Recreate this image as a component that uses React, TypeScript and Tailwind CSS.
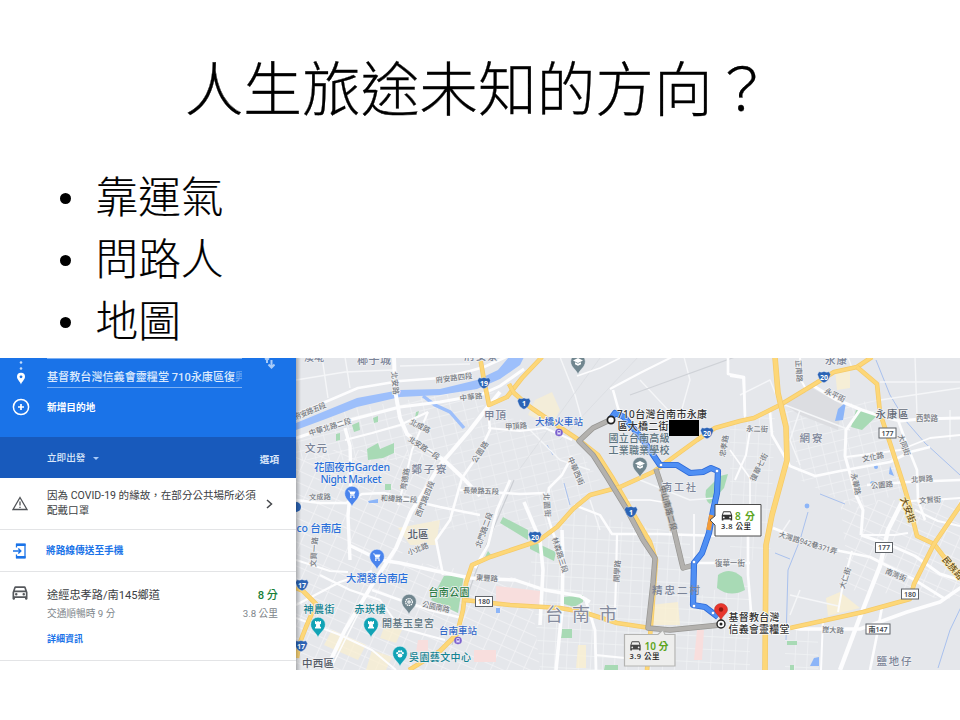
import React from "react";

const CJK = "font-['Noto_Sans','Noto_Sans_CJK_TC',sans-serif]";

type Pt = string;

function Road({ d, w = 3, c = "#fdfdfe" }: { d: Pt; w?: number; c?: string }) {
  return <polyline points={d} fill="none" stroke={c} strokeWidth={w} strokeLinejoin="round" strokeLinecap="butt" />;
}

function Yellow({ d, w = 4 }: { d: Pt; w?: number }) {
  return (
    <g fill="none" strokeLinejoin="round">
      <polyline points={d} stroke="#f5ca68" strokeWidth={w + 0.6} />
      <polyline points={d} stroke="#fdd778" strokeWidth={w - 0.8} />
    </g>
  );
}

type LabelProps = {
  x: number; y: number; s: number; t: string; w: number;
  c?: string; r?: number; b?: number; halo?: string;
};

// x, y give the centre of the label; w is its drawn width.
function Label({ x, y, s, t, w, c = "#777b82", r = 0, b = 500, halo = "#f0f1f3" }: LabelProps) {
  return (
    <text
      x={x} y={y + s * 0.36} fontSize={s} fill={c} fontWeight={b} textAnchor="middle"
      textLength={w} lengthAdjust="spacing" transform={`rotate(${r} ${x} ${y})`}
      stroke={halo} strokeWidth={1.6} strokeLinejoin="round" paintOrder="stroke"
    >
      {t}
    </text>
  );
}

function Shield({ x, y, n }: { x: number; y: number; n: string }) {
  return (
    <g transform={`translate(${x} ${y})`}>
      <path d="M-5-5.2Q-2.5-4.2 0-5.6Q2.5-4.2 5-5.2L6.5-2.6C5 1 5 3.4 0 5.8C-5 3.4-5 1-6.5-2.6Z" fill="#2b63b5" stroke="#dfe7f4" strokeWidth=".4" />
      <text y="2.6" fontSize="7" fontWeight="700" fill="#fff" textAnchor="middle">{n}</text>
    </g>
  );
}

function Plate({ x, y, t, w = 17 }: { x: number; y: number; t: string; w?: number }) {
  return (
    <g>
      <rect x={x - w / 2} y={y - 5} width={w} height="10" fill="#fff" stroke="#5f6368" strokeWidth="1" />
      <text x={x} y={y + 2.6} fontSize="7" fontWeight="600" fill="#454a50" textAnchor="middle">{t}</text>
    </g>
  );
}

function Pin({ x, y, c, kind }: { x: number; y: number; c: string; kind: "cart" | "tower" | "cap" | "dot" | "art" }) {
  return (
    <g transform={`translate(${x} ${y})`}>
      <path d="M0 12.5C-1.5 7.6-7.3 5.4-7.3-.5A7.3 7.3 0 0 1 7.3-.5C7.3 5.4 1.5 7.6 0 12.5Z" fill={c} stroke="#eef2f6" strokeWidth=".5" />
      {kind === "cart" && (
        <g fill="#fff">
          <path d="M-4-3.6H-2.4L-2-2.6H3.6L2.2.8H-1.6L-2.8-2.8H-4Z" />
          <rect x="-2" y="1.3" width="4.6" height=".8" />
          <circle cx="-1.2" cy="3.1" r=".9" /><circle cx="2" cy="3.1" r=".9" />
        </g>
      )}
      {kind === "tower" && <path d="M-3-4H-1.7V-3H-.7V-4H.7V-3H1.7V-4H3V-1.2L1.8-.5L2.3 2H3V3.6H-3V2H-2.3L-1.8-.5L-3-1.2Z" fill="#fff" />}
      {kind === "cap" && <path d="M0-4L5-1.5L0 1L-5-1.5ZM-3 .3L0 1.8L3 .3V2.2L0 3.8L-3 2.2Z" fill="#fff" />}
      {kind === "dot" && (
        <g fill="none" stroke="#fff"><circle r="3.4" strokeWidth="1.2" strokeDasharray="1.4 .6" /><circle r="1.2" strokeWidth="1.2" /></g>
      )}
      {kind === "art" && (
        <g fill="#fff"><ellipse cy="1.4" rx="2.4" ry="2" /><circle cx="-2.8" cy="-.8" r="1.1" /><circle cx="2.8" cy="-.8" r="1.1" /><circle cx="-1" cy="-2.6" r="1.1" /><circle cx="1.2" cy="-2.6" r="1.1" /></g>
      )}
    </g>
  );
}

function Station({ x, y }: { x: number; y: number }) {
  return (
    <g transform={`translate(${x} ${y})`}>
      <circle r="3.8" fill="#7c62cf" />
      <rect x="-1.7" y="-2.5" width="3.4" height="4.2" rx="1" fill="#e8e2fa" />
      <path d="M-1.2-1.6H1.2V0H-1.2Z" fill="#7c62cf" />
      <path d="M-1.5 2.8L-.8 1.6M1.5 2.8L.8 1.6" stroke="#e8e2fa" strokeWidth=".6" />
    </g>
  );
}

const CAR = "M18.92 5.01C18.72 4.42 18.16 4 17.5 4h-11c-.66 0-1.21.42-1.42 1.01L3 11v8c0 .55.45 1 1 1h1c.55 0 1-.45 1-1v-1h12v1c0 .55.45 1 1 1h1c.55 0 1-.45 1-1v-8l-2.08-5.99zM6.85 6h10.29l1.04 3H5.81l1.04-3zM19 16H5v-5h14v5z";
const SOLID_CAR = "M18.92 5.01C18.72 4.42 18.16 4 17.5 4h-11c-.66 0-1.21.42-1.42 1.01L3 11v8c0 .55.45 1 1 1h1c.55 0 1-.45 1-1v-1h12v1c0 .55.45 1 1 1h1c.55 0 1-.45 1-1v-8l-2.08-5.99zM6.5 16a1.5 1.5 0 1 1 0-3a1.5 1.5 0 0 1 0 3zM17.5 16a1.5 1.5 0 1 1 0-3a1.5 1.5 0 0 1 0 3zM5 10l1.5-4.500h11L19 10z";
const LAMPS = "M7.5 12a1.5 1.5 0 1 0 0 3a1.5 1.5 0 0 0 0-3M16.5 12a1.5 1.5 0 1 0 0 3a1.5 1.5 0 0 0 0-3";

const WHITE_ROADS: [string, number][] = [
  ["296,414 330,400 358,388 400,381 440,378 470,371 484,367 506,357", 2.6],
  ["296,438 330,427 350,420 400,407 440,402 480,395 500,386 524,369", 3],
  ["394,357 395,390 400,418 407,434 425,448 445,461 463,478 480,496", 4],
  ["500,392 487,408 470,430 440,465 425,490 411,512 396,548 372,585 345,630 326,670", 4],
  ["345,428 350,446 351,480 348,516 350,560", 3.4],
  ["345,440 372,433 400,425 428,412", 2.2],
  ["296,500 320,503 346,503 362,494 384,493 410,500 440,507 480,515", 2.4],
  ["428,412 412,450 405,480 398,505", 2],
  ["488,408 490,430 478,455 462,478 450,520 436,540 443,575", 2.6],
  ["488,428 520,431 545,428 572,440", 2],
  ["460,490 490,492 520,494 545,493", 2.4],
  ["296,605 340,582 372,571", 2.2],
  ["349,545 380,560 400,563 436,571 470,578 515,580 545,590 580,596 590,602", 3.4],
  ["296,560 330,571 348,572", 2],
  ["372,590 400,600 430,610 462,618", 2.8],
  ["320,575 350,590 380,600 400,628 445,640", 2],
  ["296,618 340,635 372,650 396,670", 2],
  ["360,610 340,650 330,670", 1.6],
  ["510,480 497,510 488,545 475,568", 2.8],
  ["524,502 540,540 543,570 540,625", 3.6],
  ["562,530 563,560 562,610 556,670", 3.6],
  ["572,456 562,475 549,488 546,510 552,530 563,560", 2.6],
  ["574,505 600,515 612,534 660,534 720,536", 2.4],
  ["617,535 616,580 615,612", 2.2],
  ["585,598 595,630 596,670", 2.8],
  ["622,500 650,500 668,503", 1.6],
  ["596,655 625,658 650,660", 1.8],
  ["613,390 618,408 626,424", 2.6],
  ["610,389 640,373 672,357", 2],
  ["577,376 600,368 620,358", 1.6],
  ["728,357 728,374 744,377 745,416", 2.6],
  ["730,376 743,378 745,420", 1.8],
  ["770,412 772,435 790,466 815,476 840,471 890,462 910,452 930,447", 2.6],
  ["800,357 801,380 807,391", 2],
  ["812,385 835,399 862,410 880,416 900,421 920,419 960,418", 3.2],
  ["860,410 846,430 845,456 856,495 863,510 861,535", 3],
  ["861,535 890,545 915,556 940,574 960,580", 3],
  ["773,528 803,540 840,551 870,557 913,579 945,599", 2.8],
  ["898,420 907,445 917,470 918,500 925,520", 2.6],
  ["846,457 900,450 930,438 960,435", 1.8],
  ["867,485 908,482 960,480", 2.4],
  ["910,501 932,500 960,498", 2.2],
  ["903,500 888,530 880,566 860,617 840,670", 4.4],
  ["963,586 940,602 907,612 860,629 800,629 782,626", 3.6],
  ["882,607 876,640 870,670", 2.6],
  ["823,618 821,670", 2],
  ["852,551 843,584 838,612", 2],
  ["863,535 895,535 908,533", 2],
  ["915,510 938,521 960,526", 2],
  ["748,510 748,575 752,623", 2.6],
  ["694,563 750,563", 2.4],
  ["694,514 694,600", 1.6],
  ["750,430 746,455 735,480", 2],
  ["730,450 750,478 750,520", 1.6],
];

const MINOR = [
  "640,380 670,412 690,430", "560,357 575,395 582,420", "520,420 560,460 590,470", "610,455 650,440",
  "676,430 690,380 684,357", "640,480 690,500 715,498", "590,500 600,530", "780,405 770,380 740,395",
  "785,405 850,430", "880,382 960,382", "880,400 960,388", "915,357 917,415", "950,410 950,440",
  "800,410 790,440 800,465", "790,520 780,535", "848,357 852,368", "800,590 790,615", "790,595 838,606",
  "322,357 328,398", "296,380 345,372 394,370", "345,357 350,388", "400,366 470,364",
];

const MAIN_ROUTE = "610,420 615,413 624,417 643,440 660,465 677,465 690,473 703,472 711,468 718,471 717,493 713,511 709,533 702,553 694,563 693,605 705,607 718,617";

function MapView() {
  return (
    <svg className={`block h-[312px] w-[664px] shrink-0 ${CJK}`} viewBox="296 358 664 312">
      <defs>
        <pattern id="gridA" width="13" height="10" patternUnits="userSpaceOnUse" patternTransform="rotate(-14)">
          <path d="M0 0H13M0 0V10" stroke="#f1f2f5" strokeWidth="1.4" fill="none" />
        </pattern>
        <pattern id="gridB" width="15" height="11" patternUnits="userSpaceOnUse" patternTransform="rotate(24)">
          <path d="M0 0H15M0 0V11" stroke="#f3f4f6" strokeWidth="1.5" fill="none" />
        </pattern>
        <pattern id="gridC" width="12" height="13" patternUnits="userSpaceOnUse" patternTransform="rotate(3)">
          <path d="M0 0H12M0 0V13" stroke="#f1f3f5" strokeWidth="1.4" fill="none" />
        </pattern>
        <linearGradient id="edge" x1="0" x2="1" y1="0" y2="0">
          <stop offset="0" stopColor="#000" stopOpacity=".25" />
          <stop offset="1" stopColor="#000" stopOpacity="0" />
        </linearGradient>
      </defs>
      <rect x="296" y="358" width="664" height="312" fill="#e5e7eb" />

      {/* built-up blocks */}
      <path d="M345 410L500 385L480 410L445 460H296V440Z" fill="url(#gridA)" />
      <path d="M490 410L572 441L600 480L560 530H430L445 465Z" fill="url(#gridA)" opacity=".8" />
      <path d="M296 450H440L400 560L530 580L540 670H296Z" fill="url(#gridB)" />
      <path d="M530 550L572 512L690 535V600L750 575V670H540Z" fill="url(#gridC)" />
      <path d="M730 425L775 412L770 560L730 560Z" fill="url(#gridC)" opacity=".8" />
      <path d="M785 410L878 400L905 490L860 510L800 480Z" fill="url(#gridA)" />
      <path d="M840 500L960 500V600L850 590Z" fill="url(#gridB)" />
      <path d="M785 630H818V670H785Z" fill="url(#gridC)" />
      <path d="M782 403L812 388L842 405L838 430L800 415Z" fill="#dcdde1" />

      {/* commercial and medical blocks */}
      <g fill="#fbf0cf">
        <path d="M535 400L552 392L560 410L552 425L528 415Z" opacity=".65" />
        <path d="M398 528L440 520L436 545L410 545Z" opacity=".7" />
        <path d="M332 630L366 645L358 660L324 645ZM372 650L392 657L386 670H366ZM385 625L402 630L396 643L380 638Z" opacity=".7" />
        <path d="M650 605L678 602L680 625H652ZM578 645H586V668H576ZM835 370L850 368V388L837 390ZM826 598L840 592L860 608L828 616Z" opacity=".75" />
      </g>
      <g fill="#f8dedd">
        <path d="M496 586L540 591V604H496ZM697 630H704L702 660H694ZM418 640H428V652H416ZM474 650H496V662H474Z" />
      </g>

      {/* water */}
      <path d="M296 423L330 409L357 398L400 390L440 389L477 380L498 370L509 357H524L520 365L500 379L477 389L440 395L400 397L357 407L323 420L296 430Z" fill="#9dbffb" />
      <path d="M423 396L435 405L450 412L464 428" fill="none" stroke="#9dbffb" strokeWidth="3.4" />
      <g fill="none" stroke="#a9c1ee" strokeWidth="1">
        <path d="M876 360L890 395L905 420L925 443L960 475M808 512L800 540L788 570L786 640M962 605L950 630L938 668M775 553L790 559M820 494L845 504M547 445L553 455M564 483L570 505" />
      </g>
      <g fill="#8cb5f8">
        <path d="M838 409L846 402L843 420L835 421ZM368 501L378 499V503H369ZM890 466L894 476L889 474ZM814 658L819 657V666H810ZM446 597H457V603H447ZM496 608H500V613H496Z" />
        <circle cx="807" cy="506" r="2.4" /><circle cx="876" cy="467" r="2" /><circle cx="873" cy="484" r="3" />
      </g>

      {/* parks */}
      <g fill="#a8dab5">
        <path d="M444 576L464 575L458 613L431 600Z" />
        <path d="M367 449L378 443L380 449L394 443V453L383 458L368 460Z" />
        <path d="M352 425L359 422L360 430L354 432ZM336 434L340 433V440L336 441ZM373 418L378 416V422L374 423ZM385 484H391V490H385ZM416 412L419 411L417 418H415Z" />
        <path d="M856 410L880 413L862 430L851 427Z" />
        <path d="M706 490L720 476L728 474L724 488L710 504Q704 500 706 490Z" />
        <path d="M718 575Q730 566 742 577L745 590Q730 598 717 588Z" />
        <path d="M564 597L583 595V602L574 607L564 604ZM530 540L556 552L554 561L530 549ZM503 517L528 530V540L500 523ZM562 629H572V638H561ZM605 665H618V670H604ZM488 551L492 556L485 557ZM787 641H797V645H787ZM790 665H794V670H790Z" />
      </g>

      {MINOR.map((d) => <Road key={d} d={d} w={1.4} c="#f5f6f8" />)}
      <path d="M519 470L600 358M640 355L560 440" stroke="#d9dbe0" strokeWidth="1" fill="none" opacity=".7" />
      <path d="M514 480L480 560L466 600L452 645" stroke="#cbced3" strokeWidth="1.2" fill="none" />
      <path d="M630 395L735 357" stroke="#cfd2d7" strokeWidth="1.2" fill="none" />
      {WHITE_ROADS.map(([d, w]) => <Road key={d} d={d} w={w} />)}

      <Yellow d="480,357 484,380 489,405 507,397 522,378 542,357" />
      <Yellow d="509,384 514,393 530,407 555,424 579,440 598,455 612,477 630,508 650,542 656,560 651,625 647,670" />
      <Yellow d="409,670 440,651 457,634 463,610 466,583 472,565 490,557 520,547 538,541 557,527 573,509 590,495 620,487 653,472 697,440 715,428 740,421 754,418 780,405 813,385 834,372 857,367 872,357" />
      <Yellow d="857,367 877,384 880,413 890,443 903,483 909,503 913,520 917,536 934,544 962,580" />
      <Yellow d="962,503 934,544 914,584 910,599 863,612 790,628" />
      <Yellow d="464,600 510,605 560,608 583,612 617,623 650,628" />
      <Yellow d="296,588 303,591 316,604 306,627 299,645 297,658" />
      <Yellow d="775,357 778,393 786,427 787,460 778,493 772,515 766,545 765,670" w={5} />

      {/* alternative routes */}
      {["610,420 593,428 579,441 593,455 607,477 626,508 643,540 655,558 653,583 648,628 670,630 720,625", "656,469 668,505 683,568 694,565"].map((d) => (
        <g key={d} fill="none" strokeLinejoin="round">
          <polyline points={d} stroke="#979693" strokeWidth="5.400" />
          <polyline points={d} stroke="#b3b1ae" strokeWidth="4" />
        </g>
      ))}

      <g fill="none" strokeLinejoin="round">
        <polyline points={MAIN_ROUTE} stroke="#2d6ad8" strokeWidth="6.200" />
        <polyline points={MAIN_ROUTE} stroke="#4f8ff4" strokeWidth="4.600" />
        <path d="M711.500 515L708.500 530" stroke="#f29b38" strokeWidth="4.600" />
      </g>
      {[[661, 465], [717, 471], [694, 562], [694, 606], [713, 613]].map(([x, y]) => (
        <circle key={`${x}-${y}`} cx={x} cy={y} r="1.8" fill="#fff" stroke="#2d6ad8" strokeWidth=".6" />
      ))}

      <Label x={679} y={487} s={10} w={34} t="南工社" c="#7b8498" />
      <Label x={676} y={590} s={10.5} w={48} t="精忠二村" c="#7b8498" halo="none" />
      <Label x={639} y={438.500} s={10} w={61} t="國立台南高級" c="#5d7480" halo="#f0f1f399" />
      <Label x={639} y={450} s={10} w={61} t="工業職業學校" c="#5d7480" halo="#f0f1f399" />

      {/* street names */}
      <Label x={374} y={360} s={11} w={34} t="椰子城" c="#7b8498" />
      <Label x={314} y={357} s={10} w={20} t="溪墘" c="#7b8498" />
      <Label x={481} y={356} s={11} w={34} t="府安寮" c="#7b8498" />
      <Label x={395} y={383} s={7.500} w={23} t="北安路" r={84} />
      <Label x={454} y={378} s={7.500} w={37} t="府安路四段" r={-7} />
      <Label x={471} y={397} s={7.500} w={23} t="中華路" r={-7} />
      <Label x={310} y={411} s={7.500} w={34} t="府安路五段" r={-22} />
      <Label x={330} y={427} s={7.500} w={44} t="中華北路二段" r={-17} />
      <Label x={420} y={426} s={7.500} w={22} t="北成路" r={27} />
      <Label x={424} y={448} s={7.500} w={36} t="北安路一段" r={33} />
      <Label x={405} y={479} s={7.500} w={22} t="育德路" r={-80} />
      <Label x={425} y={499} s={7.500} w={38} t="西門路四段" r={-68} />
      <Label x={480} y={452} s={7.500} w={24} t="公園路" r={-57} />
      <Label x={481} y={491} s={7.500} w={36} t="長榮路五段" r={2} />
      <Label x={320} y={497} s={7.500} w={22} t="文成路" r={-2} />
      <Label x={399} y={499} s={7.500} w={37} t="和緯路二段" r={3} />
      <Label x={516} y={426} s={7.500} w={22} t="甲頂路" r={-4} />
      <Label x={314} y={552} s={7.500} w={30} t="文賢一路" r={-86} />
      <Label x={418} y={549} s={7.500} w={22} t="小北路" r={-22} />
      <Label x={484} y={530} s={7.500} w={37} t="北門路二段" r={-70} />
      <Label x={487} y={578} s={7.500} w={22} t="東豐路" r={4} />
      <Label x={436} y={607} s={7.500} w={28} t="公園南路" r={13} />
      <Label x={576} y={471} s={7.500} w={30} t="中華西街" r={66} />
      <Label x={547} y={505} s={7.500} w={24} t="北園街" r={86} />
      <Label x={560} y={555} s={7.500} w={37} t="林森路三段" r={72} />
      <Label x={617} y={571} s={7.500} w={22} t="開學路" r={-86} />
      <Label x={668} y={508} s={7.500} w={46} t="中山南路二段" r={75} c="#717171" halo="#bcbbb9" />
      <Label x={724} y={446} s={7.500} w={22} t="忠孝路" r={-80} />
      <Label x={757} y={429} s={7.500} w={22} t="永二街" r={2} />
      <Label x={759} y={467} s={7.500} w={30} t="復華七街" r={-64} />
      <Label x={730} y={563} s={7.500} w={30} t="復華一街" />
      <Label x={799} y={371} s={7.500} w={22} t="正南路" r={86} />
      <Label x={835} y={395} s={7.500} w={22} t="永平街" r={27} />
      <Label x={927} y={418} s={7.500} w={22} t="西勢路" />
      <Label x={873} y={457} s={7.500} w={22} t="文化路" r={-12} />
      <Label x={856} y={484} s={7.500} w={22} t="永華路" r={78} />
      <Label x={882} y={485} s={7.500} w={22} t="公園路" r={-6} />
      <Label x={922} y={479} s={7.500} w={22} t="北興路" r={-4} />
      <Label x={930} y={500} s={7.500} w={22} t="文賢街" r={-4} />
      <Label x={904} y={445} s={7.500} w={22} t="大同街" r={70} />
      <Label x={908} y={510} s={9} w={27} t="大安街" r={70} c="#6b5120" halo="#fff0bf" />
      <Label x={953} y={568} s={9} w={27} t="民族路" r={50} c="#6b5120" halo="#fff0bf" />
      <Label x={808} y={543} s={7.500} w={61} t="大灣路942巷371弄" r={17} />
      <Label x={896} y={575} s={7.500} w={22} t="南灣街" r={22} />
      <Label x={845} y={578} s={7.500} w={22} t="大仁街" r={-72} />
      <Label x={833} y={630} s={7.500} w={22} t="崑大路" r={4} />

      {/* districts */}
      <Label x={316} y={448} s={10.500} w={22} t="文元" c="#7b8498" />
      <Label x={429} y={469} s={10.500} w={35} t="鄭子寮" c="#7b8498" />
      <Label x={495} y={415} s={10.500} w={22} t="甲頂" c="#7b8498" />
      <Label x={418} y={534} s={10.500} w={21} t="北區" c="#555b66" />
      <Label x={318} y={663} s={10.500} w={32} t="中西區" c="#555b66" />
      <Label x={836} y={360} s={10.500} w={22} t="永康" c="#7b8498" />
      <Label x={892} y={414.500} s={10.500} w={33} t="永康區" c="#646b78" />
      <Label x={811} y={438} s={10.500} w={23} t="網寮" c="#7b8498" />
      <Label x={894} y={661} s={10.500} w={35} t="鹽地仔" c="#7b8498" />
      <Label x={581} y={614.500} s={18} w={72} t="台南市" c="#858b9d" b={400} />

      {/* points of interest */}
      <Label x={352} y={467} s={10.500} w={76} t="花園夜市Garden" c="#2b70da" />
      <Label x={351} y={479} s={10.500} w={61} t="Night Market" c="#2b70da" />
      <Label x={319} y={528} s={10.500} w={45} t="co 台南店" c="#2b70da" />
      <Label x={377} y={578} s={10.500} w={62} t="大潤發台南店" c="#2b70da" />
      <Label x={559} y={422} s={9.500} w={48} t="大橋火車站" c="#3469c9" />
      <Label x={458} y={630.500} s={9.500} w={38} t="台南車站" c="#3469c9" />
      <Label x={449} y={592.500} s={10} w={41} t="台南公園" c="#2c7d45" />
      <Label x={319} y={609.500} s={10} w={31} t="神農街" c="#128291" />
      <Label x={370} y={609.500} s={10} w={31} t="赤崁樓" c="#128291" />
      <Label x={408} y={623.500} s={10} w={52} t="開基玉皇宮" c="#5d7480" />
      <Label x={440} y={657.500} s={10} w={62} t="吳園藝文中心" c="#128291" />
      <Pin x={352} y={494} c="#4a84ed" kind="cart" />
      <Pin x={377} y={557} c="#4a84ed" kind="cart" />
      <Pin x={318} y={625} c="#11a3b5" kind="tower" />
      <Pin x={371} y={625} c="#11a3b5" kind="tower" />
      <Pin x={400} y={654} c="#11a3b5" kind="art" />
      <Pin x={409} y={602} c="#71868f" kind="dot" />
      <Pin x={578} y={362} c="#71868f" kind="cap" />
      <Pin x={640} y={465} c="#71868f" kind="cap" />
      <Station x={559} y={432.500} />
      <Station x={458} y={640.500} />

      <Shield x={484} y={383} n="19" />
      <Shield x={524} y={403.500} n="1" />
      <Shield x={631} y={512} n="1" />
      <Shield x={707} y={433} n="20" />
      <Shield x={824} y={377} n="20" />
      <Shield x={535} y={537} n="20" />
      <Shield x={302} y={585} n="17" />
      <Shield x={301} y={646} n="17" />
      <circle cx="296" cy="507" r="5" fill="#2b63b5" />
      <Plate x={484} y={601.500} t="180" />
      <Plate x={887.500} y={433} t="177" />
      <Plate x={884} y={547.500} t="177" />
      <Plate x={910} y={594} t="180" />
      <Plate x={878} y={629} t="南147" w={24} />

      {/* start and destination */}
      <circle cx="611" cy="420" r="3.600" fill="#fff" stroke="#222" strokeWidth="1.700" />
      <Label x={662} y={414} s={10} w={90} t="710台灣台南市永康" c="#333" halo="#ffffffb0" />
      <Label x={643} y={426} s={10} w={51} t="區大橋二街" c="#333" halo="#ffffffb0" />
      <rect x="669" y="420" width="30" height="16" fill="#000" />
      <path d="M721 621C720 615 714.500 614 714.500 609.500A6.500 6 0 0 1 727.500 609.500C727.500 614 722 615 721 621Z" fill="#e8362d" stroke="#b92820" strokeWidth=".5" />
      <circle cx="721" cy="609.500" r="2.200" fill="#8f1710" />
      <circle cx="721" cy="624" r="4" fill="#fff" stroke="#222" strokeWidth="1.400" />
      <circle cx="721" cy="624" r="1.500" fill="#222" />
      <Label x={754} y={617.500} s={10} w={51} t="基督教台灣" c="#333" halo="#fff" />
      <Label x={759} y={629.500} s={10} w={61} t="信義會靈糧堂" c="#333" halo="#fff" />

      {/* travel time boxes */}
      <path d="M715 504.500H761V536H715V525L710 520L715 516Z" fill="#fff" stroke="#4b4b4b" strokeWidth="1" />
      <g transform="translate(720 509) scale(.58)" fill="#333"><path d={SOLID_CAR} fillRule="evenodd" /></g>
      <text x="735" y="519.500" fontSize="10" fontWeight="600" fill="#5da51d" textLength="20" lengthAdjust="spacing">8 分</text>
      <text x="721" y="529" fontSize="7.500" fontWeight="500" fill="#222" textLength="30" lengthAdjust="spacing">3.8 公里</text>
      <path d="M624.500 634.500H658L663 630L665 634.500H675V666H624.500Z" fill="#eeeeed" stroke="#b4b4b2" strokeWidth="1.200" />
      <g transform="translate(628.500 639) scale(.58)" fill="#454545"><path d={SOLID_CAR} fillRule="evenodd" /></g>
      <text x="644.500" y="649.500" fontSize="10" fontWeight="600" fill="#5da51d" textLength="24" lengthAdjust="spacing">10 分</text>
      <text x="629.500" y="659" fontSize="7.500" fontWeight="500" fill="#222" textLength="30" lengthAdjust="spacing">3.9 公里</text>
      <rect x="296" y="358" width="5" height="312" fill="url(#edge)" />
    </svg>
  );
}

function Directions() {
  return (
    <div className="flex h-[312px] w-[296px] shrink-0 flex-col bg-white font-['Roboto','Noto_Sans_CJK_TC',sans-serif] leading-none whitespace-nowrap">
      <div className="flex h-[79px] flex-col bg-[#1a73e8] text-white">
        <div className="flex h-[30px]">
          <div className="flex w-[47px] justify-start pl-[15px]">
            <svg className="h-[30px] w-3" viewBox="0 0 12 30" fill="#fff">
              <circle cx="6" cy="4.500" r="1.300" opacity=".75" /><circle cx="6" cy="10.500" r="1.300" opacity=".75" />
              <path d="M6 26.500C5 23.500 2 21.500 2 18.800A4 4 0 0 1 10 18.800C10 21.500 7 23.500 6 26.500Z" />
              <circle cx="6" cy="18.800" r="1.400" fill="#1a73e8" />
            </svg>
          </div>
          <div className="flex w-[195px] items-center overflow-hidden border-t border-b border-[#7db0f3] pt-[9px] text-[11.100px] font-medium text-[#dceafd]">
            <span>基督教台灣信義會靈糧堂 710永康區復<span className="opacity-40">興</span></span>
          </div>
          <svg className="ml-[21px] h-3 w-3" viewBox="0 0 12 12" fill="none" stroke="#a9cbf8" strokeWidth="2">
            <path d="M4 0V5M2 1.500L4 0L6 1.500M8.500 2V9M5.500 6.500L8.500 9.500L11.500 6.500" />
          </svg>
        </div>
        <div className="flex h-[38px] items-center">
          <div className="w-[47px] pl-3">
            <svg className="size-[18px]" viewBox="0 0 18 18" fill="none" stroke="#fff" strokeWidth="1.500">
              <circle cx="9" cy="9" r="7.600" /><path d="M9 6V12M6 9H12" strokeWidth="1.700" />
            </svg>
          </div>
          <span className="pt-0.5 text-[9.700px] font-bold">新增目的地</span>
        </div>
      </div>
      <div className="flex h-[41px] items-center bg-[#185abc] pr-[17px] pl-[47px] text-[9.600px] font-medium text-[#dce8fa]">
        <span>立即出發</span>
        <svg className="mt-0.5 ml-2 h-[3px] w-1.5" viewBox="0 0 6 3" fill="#a9cbf8"><path d="M0 0H6L3 3Z" /></svg>
        <span className="mt-1 ml-auto font-bold">選項</span>
      </div>
      <div className="flex h-[52px] items-center border-b border-[#e3e4e6]">
        <div className="w-[47px] pl-3">
          <svg className="h-[15px] w-4" viewBox="0 0 16 15" fill="none" stroke="#505357" strokeWidth="1.300">
            <path d="M8 1.500L15 13.500H1Z" /><path d="M8 5.500V9.500M8 10.700V12" />
          </svg>
        </div>
        <p className="w-[215px] text-[10.550px] leading-[14.500px] text-[#3c4043]">因為 COVID-19 的緣故，在部分公共場所必須<br />配戴口罩</p>
        <svg className="ml-1 h-[10px] w-[7px]" viewBox="0 0 7 10" fill="none" stroke="#45484c" strokeWidth="1.500"><path d="M1 1L5.500 5L1 9" /></svg>
      </div>
      <div className="flex h-[42px] items-center border-b border-[#e3e4e6] text-[#1a73e8]">
        <div className="w-[46px] pl-[13px]">
          <svg className="h-4 w-[13px]" viewBox="0 0 13 16" fill="none" stroke="currentColor">
            <path d="M3.500 4.500V1.500H12V14.500H3.500V11.500" strokeWidth="1.300" /><path d="M3 1.800H12.500M3 14.200H12.500" strokeWidth="2.400" />
            <path d="M0 8H7.500M5.300 5.500L7.800 8L5.300 10.500" strokeWidth="1.400" />
          </svg>
        </div>
        <span className="text-[9.700px] font-bold">將路線傳送至手機</span>
      </div>
      <div className="flex h-[89px] border-b border-[#e3e4e6] pr-[18px]">
        <div className="w-[47px] pt-[11px] pl-[10px]">
          <svg className="size-5" viewBox="0 0 24 24" fill="#55585c"><path d={CAR} /><path d={LAMPS} /></svg>
        </div>
        <div className="flex flex-1 flex-col pt-[18px]">
          <div className="flex justify-between text-[11.200px] text-[#3c4043]">
            <span>途經忠孝路/南145鄉道</span><span className="font-medium text-[#188038]">8 分</span>
          </div>
          <div className="mt-2 flex justify-between text-[9.700px] text-[#80868b]">
            <span>交通順暢時 9 分</span><span>3.8 公里</span>
          </div>
          <span className="mt-4 text-[9px] font-bold text-[#1a73e8]">詳細資訊</span>
        </div>
      </div>
    </div>
  );
}

export default function App() {
  return (
    <div className={`flex h-[720px] w-[960px] flex-col overflow-hidden bg-white text-black ${CJK}`}>
      <h1 className="flex h-[166px] items-center justify-center pt-[10px] pr-1 text-[58.670px] leading-none font-light [-webkit-text-stroke:0.3px_black]">
        人生旅途未知的方向？
      </h1>
      <ul className="flex h-[192px] flex-col pl-[60px]">
        {["靠運氣", "問路人", "地圖"].map((item) => (
          <li key={item} className="flex h-[62px] items-center text-[42.670px] leading-none font-light">
            <span className="mt-[3px] mr-[25px] size-[10.500px] rounded-full bg-black" />
            <span className="[-webkit-text-stroke:0.2px_black]">{item}</span>
          </li>
        ))}
      </ul>
      <div className="flex">
        <Directions />
        <MapView />
      </div>
    </div>
  );
}
